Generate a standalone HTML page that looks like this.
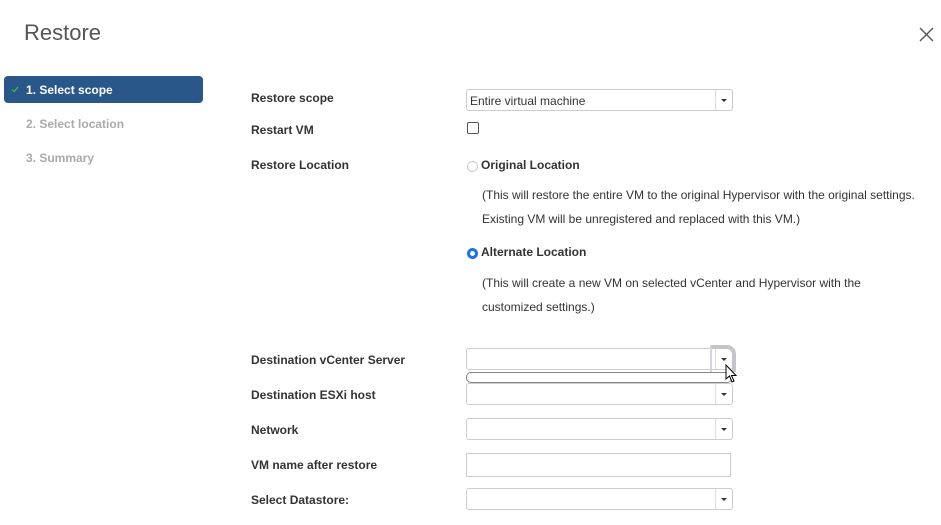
<!DOCTYPE html>
<html><head><style>
*{margin:0;padding:0;box-sizing:border-box}
body{width:941px;height:525px;background:#fff;font-family:"Liberation Sans",Arial,sans-serif;position:relative;overflow:hidden;color:#333}
.a{position:absolute;white-space:nowrap}
.lbl{font-size:12px;font-weight:bold;color:#333}
.t{font-size:12px;color:#333}
.sel{position:absolute;height:22px;border:1px solid #ccc;border-radius:3px;background:#fff}
.sel:after{content:"";position:absolute;right:0;top:0;bottom:0;width:16px;border-left:1px solid #ddd}
.sel i{position:absolute;right:5px;top:9px;border-left:3px solid transparent;border-right:3px solid transparent;border-top:3px solid #333;z-index:1}
</style></head><body>
<div class="a" style="left:24px;top:20px;font-size:22px;color:#555;font-weight:300">Restore</div>
<svg class="a" style="left:919px;top:27px" width="15" height="15"><path d="M1 1L14 14M14 1L1 14" stroke="#555" stroke-width="1.4"/></svg>
<div class="a" style="left:4px;top:76px;width:199px;height:27px;background:#29578a;border-radius:4px"></div>
<svg class="a" style="left:11px;top:86px" width="8" height="7"><path d="M1 3.5L3 5.5L7 1" stroke="#3c3" stroke-width="1.2" fill="none"/></svg>
<div class="a" style="left:26px;top:83px;font-size:12px;font-weight:bold;color:#fff">1. Select scope</div>
<div class="a" style="left:26px;top:117px;font-size:12px;font-weight:bold;color:#aaa">2. Select location</div>
<div class="a" style="left:26px;top:151px;font-size:12px;font-weight:bold;color:#aaa">3. Summary</div>

<div class="a lbl" style="left:251px;top:91px">Restore scope</div>
<div class="sel" style="left:466px;top:89px;width:267px"><span class="a t" style="left:3px;top:4px">Entire virtual machine</span><i></i></div>
<div class="a lbl" style="left:251px;top:123px">Restart VM</div>
<div class="a" style="left:467px;top:122px;width:12px;height:12px;border:1px solid #555;border-radius:2px"></div>
<div class="a lbl" style="left:251px;top:158px">Restore Location</div>
<div class="a" style="left:467px;top:161px;width:11px;height:11px;border:1px solid #ccc;border-radius:50%"></div>
<div class="a lbl" style="left:481px;top:158px">Original Location</div>
<div class="a t" style="left:482px;top:188px">(This will restore the entire VM to the original Hypervisor with the original settings.</div>
<div class="a t" style="left:482px;top:212px">Existing VM will be unregistered and replaced with this VM.)</div>
<div class="a" style="left:467px;top:248px;width:11px;height:11px;border:3px solid #1a73e8;border-radius:50%"></div>
<div class="a lbl" style="left:481px;top:245px">Alternate Location</div>
<div class="a t" style="left:482px;top:276px">(This will create a new VM on selected vCenter and Hypervisor with the</div>
<div class="a t" style="left:482px;top:300px">customized settings.)</div>

<div class="a lbl" style="left:251px;top:353px">Destination vCenter Server</div>
<div class="sel" style="left:466px;top:348px;width:267px"><i></i></div>
<div class="a" style="left:710px;top:345px;width:26px;height:27px;border:4px solid #c4c4cc;border-left:2px solid #d4d4dc;border-bottom:none;border-radius:2px 9px 0 0"></div>
<div class="a" style="left:466px;top:372px;width:266px;height:11px;border:1px solid #888;border-radius:5px"></div>
<svg class="a" style="left:725px;top:364px" width="14" height="20"><path d="M1 1L1 15L4.5 12L7 18L9 17L6.5 11.5L11 11.5Z" fill="#fff" stroke="#000" stroke-width="1"/></svg>
<div class="a lbl" style="left:251px;top:388px">Destination ESXi host</div>
<div class="sel" style="left:466px;top:383px;width:267px"><i></i></div>
<div class="a lbl" style="left:251px;top:423px">Network</div>
<div class="sel" style="left:466px;top:418px;width:267px"><i></i></div>
<div class="a lbl" style="left:251px;top:458px">VM name after restore</div>
<div class="a" style="left:466px;top:453px;width:265px;height:24px;border:1px solid #ccc"></div>
<div class="a lbl" style="left:251px;top:493px">Select Datastore:</div>
<div class="sel" style="left:466px;top:488px;width:267px"><i></i></div>
</body></html>
